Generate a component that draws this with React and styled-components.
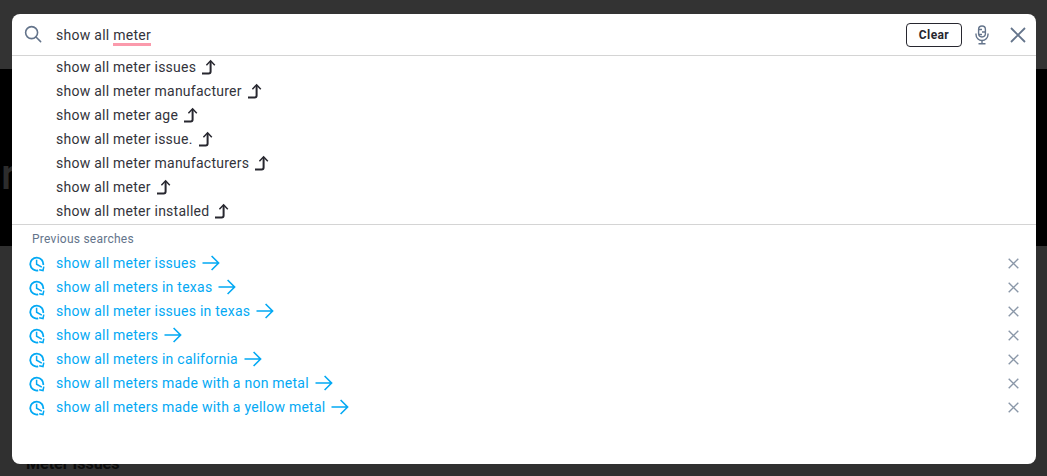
import styled, { createGlobalStyle } from "styled-components";

const suggestions = [
  "show all meter issues",
  "show all meter manufacturer",
  "show all meter age",
  "show all meter issue.",
  "show all meter manufacturers",
  "show all meter",
  "show all meter installed",
];

const previous = [
  "show all meter issues",
  "show all meters in texas",
  "show all meter issues in texas",
  "show all meters",
  "show all meters in california",
  "show all meters made with a non metal",
  "show all meters made with a yellow metal",
];

const SearchIcon = () => (
  <svg width="18" height="18" viewBox="0 0 18 18" fill="none" stroke="#64748b" strokeWidth="1.6">
    <circle cx="7.6" cy="7.6" r="6" />
    <path d="M12 12 L16.6 16.6" strokeLinecap="round" />
  </svg>
);

const MicIcon = () => (
  <svg width="16" height="20" viewBox="0 0 16 20" fill="none" stroke="#64748b" strokeWidth="1.4">
    <rect x="4.6" y="1" width="6.8" height="11" rx="3.4" />
    <path d="M5 4.5h3M8 7h3M5 9.5h3" />
    <path d="M2 8.5v1a6 6 0 0 0 12 0v-1" />
    <path d="M8 15.5v3M4.5 18.7h7" />
  </svg>
);

const CloseIcon = ({ size, color, width }) => (
  <svg width={size} height={size} viewBox="0 0 16 16" fill="none" stroke={color} strokeWidth={width}>
    <path d="M1 1 L15 15 M15 1 L1 15" />
  </svg>
);

const TurnIcon = () => (
  <svg width="14" height="16" viewBox="0 0 14 16" fill="none" stroke="#27272f">
    <path d="M0 14.4h6.6c1.3 0 2-.7 2-1.9V2.4" strokeWidth="2" />
    <path d="M4.4 6.2 L8.6 1.8 L12.8 6.2" strokeWidth="1.5" />
  </svg>
);

const HistoryIcon = () => (
  <svg width="16" height="16" viewBox="0 0 16 16" fill="none" stroke="#03a9f4" strokeWidth="1.8">
    <path d="M14.2 9A6.5 6.5 0 1 0 9.2 14.4" />
    <path d="M7.6 3.8v4.4l5.2 3" strokeWidth="1.5" />
    <path d="M14.8 10.6 L14 14.6 L10.2 13.8" strokeWidth="1.5" />
  </svg>
);

const ArrowIcon = () => (
  <svg width="18" height="16" viewBox="0 0 18 16" fill="none" stroke="#03a9f4" strokeWidth="1.6">
    <path d="M0.5 8h16M9.6 1 L16.6 8 L9.6 15" />
  </svg>
);

export default function App() {
  return (
    <Page>
      <GlobalStyle />
      <TopBar />
      <Hero>r</Hero>
      <Content>Meter Issues</Content>

      <Modal>
        <SearchBar>
          <IconSlot>
            <SearchIcon />
          </IconSlot>
          <Query>
            show all <Misspelt>meter</Misspelt>
          </Query>
          <ClearButton>Clear</ClearButton>
          <MicSlot>
            <MicIcon />
          </MicSlot>
          <CloseSlot>
            <CloseIcon size={16} color="#64748b" width={1.8} />
          </CloseSlot>
        </SearchBar>

        <Suggestions>
          {suggestions.map((text, i) => (
            <SuggestionRow key={i}>
              {text}
              <TurnIcon />
            </SuggestionRow>
          ))}
        </Suggestions>

        <PreviousBlock>
          <PreviousTitle>Previous searches</PreviousTitle>
          {previous.map((text, i) => (
            <PreviousRow key={i}>
              <HistoryGlyph>
                <HistoryIcon />
              </HistoryGlyph>
              <PreviousLink>
                {text}
                <ArrowIcon />
              </PreviousLink>
              <RemoveSlot>
                <CloseIcon size={11} color="#8a97a8" width={2} />
              </RemoveSlot>
            </PreviousRow>
          ))}
        </PreviousBlock>
      </Modal>
    </Page>
  );
}

const GlobalStyle = createGlobalStyle`
  html, body {
    margin: 0;
    padding: 0;
    background: #303030;
  }
  body {
    font-family: Roboto, "Liberation Sans", sans-serif;
  }
`;

const Page = styled.div`
  position: relative;
  width: 1047px;
  height: 476px;
  overflow: hidden;
  background: #303030;
`;

const TopBar = styled.div`
  height: 69px;
  background: #333333;
`;

const Hero = styled.div`
  height: 177px;
  background: #000;
  color: #2c2c2c;
  font-size: 42px;
  font-weight: 500;
  line-height: 212px;
  padding-left: 1px;
  box-sizing: border-box;
  overflow: hidden;
`;

const Content = styled.div`
  padding: 208px 0 0 26px;
  font-size: 16px;
  font-weight: 700;
  line-height: 20px;
  color: #0b0b0b;
`;

const Modal = styled.div`
  position: absolute;
  left: 12px;
  top: 14px;
  width: 1024px;
  height: 450px;
  background: #fff;
  border-radius: 8px;
  overflow: hidden;
`;

const SearchBar = styled.div`
  display: flex;
  align-items: center;
  height: 41px;
  border-bottom: 1px solid #d4d4d4;
`;

const IconSlot = styled.div`
  display: flex;
  width: 44px;
  padding: 0 0 1px 12px;
  box-sizing: border-box;
`;

const Query = styled.div`
  flex: 1;
  font-size: 14px;
  letter-spacing: 0.27px;
  color: #33333b;
`;

const Misspelt = styled.span`
  border-bottom: 3px solid #fb9aac;
`;

const ClearButton = styled.button`
  width: 56px;
  height: 24px;
  padding: 0;
  background: #fff;
  border: 1px solid #27272f;
  border-radius: 4px;
  font-family: inherit;
  font-size: 12px;
  font-weight: 700;
  letter-spacing: 0.4px;
  color: #27272f;
`;

const MicSlot = styled.div`
  display: flex;
  margin-left: 12px;
`;

const CloseSlot = styled.div`
  display: flex;
  margin: 0 10px 0 20px;
`;

const Suggestions = styled.div`
  border-bottom: 1px solid #d4d4d4;
  margin-top: -1px;
  padding-bottom: 1px;
`;

const SuggestionRow = styled.div`
  display: flex;
  align-items: center;
  gap: 6px;
  height: 24px;
  padding-left: 44px;
  font-size: 14px;
  letter-spacing: 0.25px;
  color: #33333b;
`;

const PreviousBlock = styled.div`
  padding-top: 6px;
`;

const PreviousTitle = styled.div`
  height: 16px;
  line-height: 16px;
  padding-left: 20px;
  margin-bottom: 4px;
  font-size: 12px;
  letter-spacing: 0.25px;
  color: #64748b;
`;

const PreviousRow = styled.div`
  display: flex;
  align-items: center;
  height: 24px;
  padding-left: 17px;
  font-size: 14px;
  letter-spacing: 0.25px;
  color: #03a9f4;
`;

const HistoryGlyph = styled.div`
  display: flex;
  padding-top: 2px;
`;

const PreviousLink = styled.div`
  flex: 1;
  display: flex;
  align-items: center;
  gap: 6px;
  margin-left: 11px;
`;

const RemoveSlot = styled.div`
  display: flex;
  margin-right: 17px;
`;
